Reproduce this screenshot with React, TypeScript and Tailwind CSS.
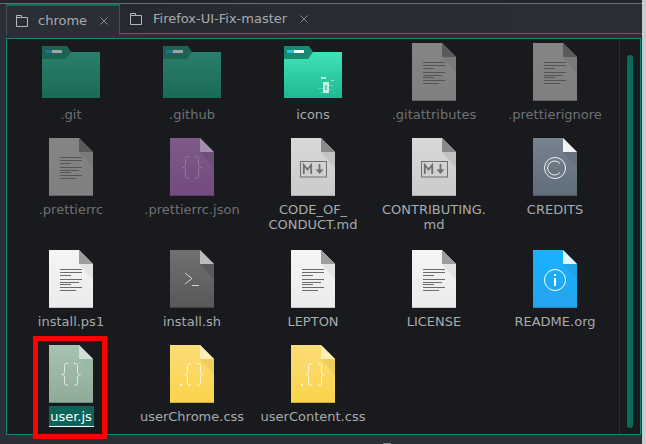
const font = "font-['DejaVu_Sans',sans-serif]";

type FileTone = {
  top: string;
  bottom: string;
  edge: string;
  fold: string;
  shade: string;
};

const tones: Record<string, FileTone> = {
  gray: { top: "#858585", bottom: "#7f7f7f", edge: "#636363", fold: "#5a5a5a", shade: "#7a7a7a" },
  white: { top: "#f5f5f5", bottom: "#ebebeb", edge: "#c4c4c4", fold: "#9d9d9d", shade: "#e4e4e4" },
  light: { top: "#d8d8d8", bottom: "#cbcbcb", edge: "#aeaeae", fold: "#8a8a8a", shade: "#c2c2c2" },
  purple: { top: "#7d5b87", bottom: "#744a80", edge: "#5f3f6a", fold: "#a48eab", shade: "#6d4f78" },
  slate: { top: "#77848f", bottom: "#5f6d79", edge: "#4e5a64", fold: "#f2f4f5", shade: "#66737e" },
  dark: { top: "#707070", bottom: "#585858", edge: "#444444", fold: "#bcbcbc", shade: "#5a5a5a" },
  blue: { top: "#18b2ff", bottom: "#25a4ec", edge: "#1c86c4", fold: "#e4f4fd", shade: "#1fa2e6" },
  green: { top: "#a8c2b1", bottom: "#8fab98", edge: "#5f8f79", fold: "#d0e0d6", shade: "#9ab9a6" },
  yellow: { top: "#fcdc78", bottom: "#f9d44a", edge: "#cdaa3c", fold: "#feeeb4", shade: "#f0cd5c" },
};

function TextLines({ color }: { color: string }) {
  const rows: [number, number][] = [[19, 33], [22, 33], [25, 22], [29, 33], [32, 30], [34, 22], [37, 33], [40, 27]];
  return (
    <g fill={color}>
      {rows.map(([y, end]) => (
        <rect key={y} x="11" y={y} width={end - 11} height="1" />
      ))}
    </g>
  );
}

function Braces({ color, dot }: { color: string; dot?: boolean }) {
  return (
    <g fill="none" stroke={color} strokeWidth="1">
      <g transform={dot ? "translate(2 0)" : undefined}>
        <path d="M19 18.5h-2c-1.2 0-1.5.8-1.5 2v6.500c0 1.400-.8 2.500-3 2.500 2.200 0 3 1.100 3 2.500v6c0 1.200.3 2 1.500 2h2" />
        <path d="M25 18.500h2c1.200 0 1.500.8 1.500 2v6.500c0 1.400.8 2.500 3 2.500-2.200 0-3 1.100-3 2.500v6c0 1.200-.3 2-1.500 2h-2" />
      </g>
      {dot && <rect x="10" y="39" width="2" height="2" fill={color} stroke="none" />}
    </g>
  );
}

function FileIcon({ id, tone, children }: { id: string; tone: string; children?: React.ReactNode }) {
  const t = tones[tone];
  return (
    <svg width="44" height="58" viewBox="0 0 44 58" className="block">
      <defs>
        <linearGradient id={id} x1="0" y1="0" x2="0" y2="1">
          <stop offset="0" stopColor={t.top} />
          <stop offset="1" stopColor={t.bottom} />
        </linearGradient>
      </defs>
      <path d="M0 0H30L44 14V58H0Z" fill={`url(#${id})`} />
      <path d="M30 14H44V30Z" fill={t.shade} />
      <rect x="0" y="57" width="44" height="1" fill={t.edge} />
      <path d="M30 0L44 14H30Z" fill={t.fold} />
      {children}
    </svg>
  );
}

function FolderIcon({ id, bright }: { id: string; bright?: boolean }) {
  const top = bright ? "#40e3b7" : "#2a7f6c";
  const bottom = bright ? "#1fb893" : "#1b6a58";
  const tab = bright ? "#188a72" : "#1d6353";
  return (
    <svg width="58" height="58" viewBox="0 0 58 58" className="block">
      <defs>
        <linearGradient id={id} x1="0" y1="0" x2="0" y2="1">
          <stop offset="0" stopColor={top} />
          <stop offset="1" stopColor={bottom} />
        </linearGradient>
      </defs>
      <path d="M0 9H58V55H0Z" fill={`url(#${id})`} />
      <path d="M0 3H25L29 9L24 16H0Z" fill={tab} />
      <rect x="3" y="7" width="7" height="3" fill={bright ? "#22c4ee" : "#1f7096"} />
      <rect x="10" y="7" width="10" height="3" fill={bright ? "#ffffff" : "#9ba5a3"} />
      {bright && (
        <g fill="#e8f8f3">
          <rect x="37" y="34" width="5" height="2" opacity=".8" />
          <rect x="47" y="37" width="3" height="1" opacity=".5" />
          <rect x="39" y="39" width="6" height="11" opacity=".85" />
          <rect x="41" y="42" width="2" height="5" fill="#5fcfb1" />
          <rect x="34" y="45" width="5" height="1" opacity=".25" />
          <rect x="45" y="42" width="4" height="1" opacity=".35" />
          <rect x="45" y="46" width="3" height="1" opacity=".25" />
          <rect x="36" y="49" width="3" height="1" opacity=".2" />
        </g>
      )}
    </svg>
  );
}

function MarkdownMark() {
  return (
    <g>
      <rect x="9.500" y="23.500" width="26" height="15.500" fill="none" stroke="#6f6f6f" strokeWidth="1" />
      <path d="M12.800 36V27L16.500 31.500L20.200 27V36" fill="none" stroke="#6f6f6f" strokeWidth="1.800" />
      <path d="M28.500 26V33" stroke="#6f6f6f" strokeWidth="1.800" />
      <path d="M24.500 31.500H32.500L28.500 36Z" fill="#6f6f6f" />
    </g>
  );
}

type Item = { name: React.ReactNode; icon: React.ReactNode; dim?: boolean; selected?: boolean };

const items: Item[] = [
  { name: ".git", dim: true, icon: <FolderIcon id="f1" /> },
  { name: ".github", dim: true, icon: <FolderIcon id="f2" /> },
  { name: "icons", icon: <FolderIcon id="f3" bright /> },
  { name: ".gitattributes", dim: true, icon: <FileIcon id="a1" tone="gray"><TextLines color="#555555" /></FileIcon> },
  { name: ".prettierignore", dim: true, icon: <FileIcon id="a2" tone="gray"><TextLines color="#555555" /></FileIcon> },
  { name: ".prettierrc", dim: true, icon: <FileIcon id="a3" tone="gray"><TextLines color="#555555" /></FileIcon> },
  { name: ".prettierrc.json", dim: true, icon: <FileIcon id="a4" tone="purple"><Braces color="#92799a" /></FileIcon> },
  { name: <>CODE_OF_<br />CONDUCT.md</>, icon: <FileIcon id="a5" tone="light"><MarkdownMark /></FileIcon> },
  { name: <>CONTRIBUTING.<br />md</>, icon: <FileIcon id="a6" tone="light"><MarkdownMark /></FileIcon> },
  {
    name: "CREDITS",
    icon: (
      <FileIcon id="a7" tone="slate">
        <g fill="none" stroke="#eef1f3" strokeWidth="1">
          <circle cx="22" cy="30" r="10.500" />
          <path d="M27 25.500A7 7 0 1 0 27 34.500" />
        </g>
      </FileIcon>
    ),
  },
  { name: "install.ps1", icon: <FileIcon id="b1" tone="white"><TextLines color="#6b6b6b" /></FileIcon> },
  {
    name: "install.sh",
    icon: (
      <FileIcon id="b2" tone="dark">
        <path d="M15 23L22 28.500L15 34" fill="none" stroke="#d6d6d6" strokeWidth="1" />
        <rect x="22" y="35" width="7" height="1" fill="#d6d6d6" />
      </FileIcon>
    ),
  },
  { name: "LEPTON", icon: <FileIcon id="b3" tone="white"><TextLines color="#6b6b6b" /></FileIcon> },
  { name: "LICENSE", icon: <FileIcon id="b4" tone="white"><TextLines color="#6b6b6b" /></FileIcon> },
  {
    name: "README.org",
    icon: (
      <FileIcon id="b5" tone="blue">
        <circle cx="22" cy="30" r="10.500" fill="none" stroke="#ffffff" strokeWidth="1" />
        <rect x="21" y="24" width="2" height="2" fill="#ffffff" />
        <rect x="21" y="28" width="2" height="8" fill="#ffffff" />
      </FileIcon>
    ),
  },
  { name: "user.js", selected: true, icon: <FileIcon id="c1" tone="green"><Braces color="#dfe9e3" /></FileIcon> },
  { name: "userChrome.css", icon: <FileIcon id="c2" tone="yellow"><Braces color="#fff6d8" dot /></FileIcon> },
  { name: "userContent.css", icon: <FileIcon id="c3" tone="yellow"><Braces color="#fff6d8" dot /></FileIcon> },
];

function FolderTabGlyph() {
  return (
    <svg width="12" height="12" viewBox="0 0 12 12" className="shrink-0">
      <path d="M.5 11.500V.5H5.500V2.500H11.500V11.500ZM.5 2.500H5.500" fill="none" stroke="#b4b6b8" strokeWidth="1" />
    </svg>
  );
}

function CloseGlyph() {
  return (
    <svg width="8" height="8" viewBox="0 0 8 8" className="ml-[13px] shrink-0">
      <path d="M.5 .5L7.500 7.500M7.500 .5L.5 7.500" stroke="#878a8d" strokeWidth="1" />
    </svg>
  );
}

export default function App() {
  return (
    <div className={`relative flex h-[444px] w-[646px] flex-col overflow-hidden bg-[#2a2e37] ${font}`}>
      <div className="h-[3px] bg-[#23262c]" />
      <div className="h-px bg-[#6a6c70]" />
      <div className="flex h-[30px] pl-[6px]">
        <div className="flex h-[31px] w-[114px] items-center border-x border-t-2 border-x-[#4a4d54] border-t-[#0b6d5e] bg-[#2a2e37] pl-[9px] text-[13px] text-[#a9abad]">
          <FolderTabGlyph />
          <span className="ml-[10px]">chrome</span>
          <CloseGlyph />
        </div>
        <div className="flex flex-1 items-center border-b border-[#5b5e63] bg-linear-to-r from-[#262a30] to-[#2a2e37] pl-[10px] text-[13px] text-[#a9abad]">
          <FolderTabGlyph />
          <span className="ml-[11px]">Firefox-UI-Fix-master</span>
          <CloseGlyph />
        </div>
      </div>
      <div className="mt-[4px] ml-[6px] flex h-[397px] w-[635px] border border-[#0e8575] bg-[#181a1e]">
        <div className="grid flex-1 grid-cols-[repeat(5,121px)] grid-rows-[95px_112px_95px_95px] border-r border-[#2a2c31] pt-[4px] pl-[3.5px]">
          {items.map((item, i) => (
            <div key={i} className="flex flex-col items-center">
              {item.icon}
              <div
                className={`text-center text-[13px] leading-[15px] ${item.dim ? "text-[#6f7173]" : "text-[#a9abad]"} ${item.selected ? "mt-[3px] w-[45px] border-b border-white bg-[#0b6457] pt-[3px] pb-[2px] text-white" : "mt-[6px]"}`}
              >
                {item.name}
              </div>
            </div>
          ))}
        </div>
        <div className="flex w-[20px] justify-center pt-[16px]">
          <div className="h-[373px] w-[6px] rounded-full bg-[#0a6a5b]" />
        </div>
      </div>
      <div className="absolute top-0 right-0 h-full w-[4px] bg-[#c9cbcd]" />
      <div className="absolute top-[443px] left-[383px] h-px w-[8px] rounded-t-full bg-[#8a8c8f]" />
      <div className="absolute top-[336px] left-[33px] h-[103px] w-[74px] border-[5px] border-[#ff0000]" />
    </div>
  );
}
